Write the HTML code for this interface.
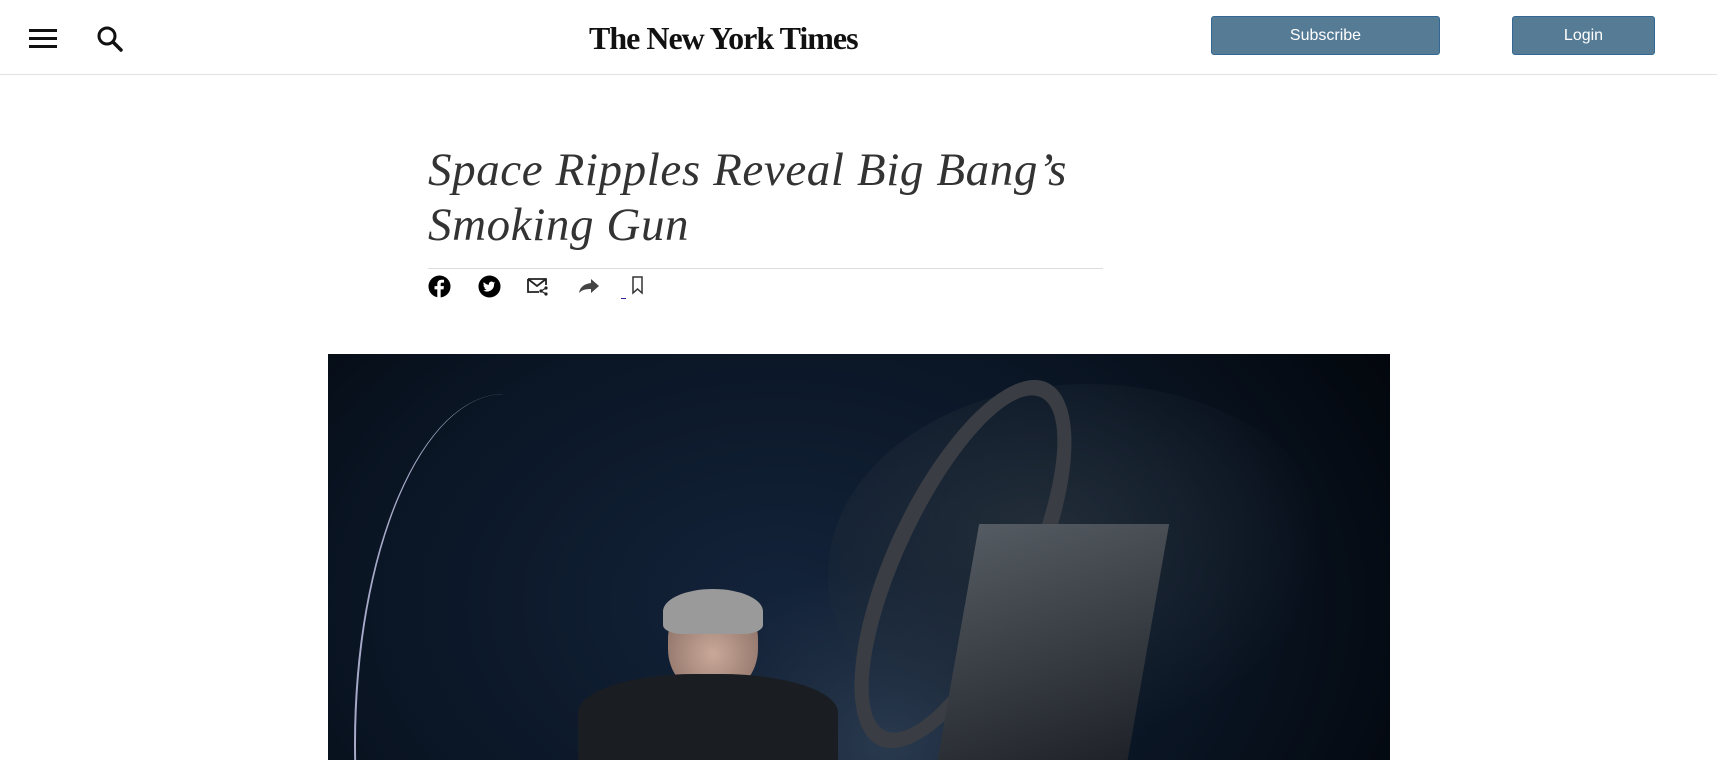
<!DOCTYPE html>
<html><head><meta charset="utf-8"><style>
*{margin:0;padding:0;box-sizing:border-box}
html,body{width:1717px;height:760px;overflow:hidden}
body{background:#fff;font-family:"Liberation Sans",sans-serif;position:relative}
.hdr{position:absolute;left:0;top:0;width:1717px;height:75px;border-bottom:1px solid #e2e2e2}
.btn{position:absolute;top:16px;height:39px;background:#567b95;border:1px solid #326891;border-radius:3px;color:#fff;font-size:16px;text-align:center;line-height:37px}
.logo{position:absolute;left:589px;top:20px;width:282px;font-family:"Liberation Serif",serif;font-weight:bold;font-size:32px;letter-spacing:-1px;color:#111;white-space:nowrap}
h1{position:absolute;left:428px;top:143px;width:720px;font-family:"Liberation Serif",serif;font-style:italic;font-weight:normal;font-size:47px;letter-spacing:0.6px;line-height:55px;color:#333}
.rule{position:absolute;left:428px;top:268px;width:675px;height:1px;background:#ddd}
.ic{position:absolute;top:275px}
.img{position:absolute;left:328px;top:354px;width:1062px;height:406px;overflow:hidden;
background:radial-gradient(ellipse 300px 250px at 560px 390px,#2a3a4e 0%,rgba(20,30,45,0) 70%),radial-gradient(ellipse 700px 500px at 450px 250px,#13233a 0%,#0a1524 60%,#03070d 100%)}
</style></head><body>
<div class="hdr">
<svg style="position:absolute;left:29px;top:27px" width="28" height="22" viewBox="0 0 28 22"><rect y="2" width="28" height="3" fill="#111"/><rect y="10" width="28" height="3" fill="#111"/><rect y="18" width="28" height="3" fill="#111"/></svg>
<svg style="position:absolute;left:96px;top:25px" width="28" height="28" viewBox="0 0 28 28"><circle cx="11" cy="11" r="8" fill="none" stroke="#111" stroke-width="3"/><path d="M17 17 L25 25" stroke="#111" stroke-width="3.5" stroke-linecap="round"/></svg>
<div class="logo">The New York Times</div>
<div class="btn" style="left:1211px;width:229px">Subscribe</div>
<div class="btn" style="left:1512px;width:143px">Login</div>
</div>
<h1>Space Ripples Reveal Big Bang’s<br>Smoking Gun</h1>
<div class="rule"></div>
<svg class="ic" style="left:428px" width="23" height="23" viewBox="0 0 24 24"><circle cx="12" cy="12" r="11.5" fill="#000"/><path d="M13.2 24V15h3l.4-3.4h-3.4V9.6c0-1 .3-1.6 1.7-1.6h1.8V5a24 24 0 0 0-2.6-.1c-2.6 0-4.4 1.6-4.4 4.5v2.2H6.8V15h2.9v9z" fill="#fff"/></svg>
<svg class="ic" style="left:478px" width="23" height="23" viewBox="0 0 24 24"><circle cx="12" cy="12" r="11.5" fill="#000"/><path d="M18 8.2c-.5.2-1 .4-1.5.4.6-.3 1-.9 1.2-1.5-.5.3-1.1.5-1.7.7a2.6 2.6 0 0 0-4.5 2.4A7.5 7.5 0 0 1 6 7.4a2.6 2.6 0 0 0 .8 3.5c-.4 0-.8-.1-1.2-.3 0 1.3.9 2.4 2.1 2.6-.4.1-.8.1-1.2 0 .3 1 1.3 1.8 2.5 1.800A5.300 5.300 0 0 1 5.300 16.100 7.500 7.500 0 0 0 16.800 9.400V9c.5-.3.9-.8 1.200-.8z" fill="#fff"/></svg>
<svg class="ic" style="left:526px" width="24" height="22" viewBox="0 0 24 22"><path d="M2 4h18v6M2 4v13h11M2 4l9 7 9-7" fill="none" stroke="#222" stroke-width="1.8"/><circle cx="20" cy="13" r="1.6" fill="#222"/><circle cx="20" cy="19" r="1.6" fill="#222"/><circle cx="15" cy="16" r="1.6" fill="#222"/><path d="M20 13l-5 3 5 3" stroke="#222" stroke-width="1.2" fill="none"/></svg>
<svg class="ic" style="left:577px" width="24" height="22" viewBox="0 0 24 22"><path d="M14 4l8 7-8 7v-4c-6 0-9 1-12 4 1-6 5-9 12-10z" fill="#444"/></svg>
<div style="position:absolute;left:621px;top:298px;width:5px;height:1px;background:#3a1a9a"></div>
<svg class="ic" style="left:631px" width="14" height="22" viewBox="0 0 14 22"><path d="M2 2h9v16l-4.5-4L2 18z" fill="none" stroke="#333" stroke-width="1.5"/></svg>
<div class="img">
<div style="position:absolute;left:26px;top:40px;width:300px;height:700px;border-left:2px solid rgba(220,220,255,.75);border-radius:50%"></div>
<div style="position:absolute;left:500px;top:30px;width:520px;height:380px;border-radius:50%;background:radial-gradient(ellipse at 40% 40%,rgba(40,50,60,.8),rgba(0,0,0,0) 65%)"></div>
<div style="position:absolute;left:560px;top:10px;width:150px;height:400px;border-radius:50%;border:16px solid #3a3e44;transform:rotate(25deg)"></div>
<div style="position:absolute;left:630px;top:170px;width:190px;height:240px;background:linear-gradient(160deg,#555b62,#1e2228);transform:skewX(-10deg)"></div>
<div style="position:absolute;left:340px;top:240px;width:90px;height:100px;border-radius:45%;background:radial-gradient(circle at 50% 60%,#c9a898,#7a6058)"></div>
<div style="position:absolute;left:335px;top:235px;width:100px;height:45px;border-radius:50% 50% 20% 20%;background:#9a9a9a"></div>
<div style="position:absolute;left:250px;top:320px;width:260px;height:86px;border-radius:45% 45% 0 0;background:#1a1d22"></div>
</div>
</body></html>
